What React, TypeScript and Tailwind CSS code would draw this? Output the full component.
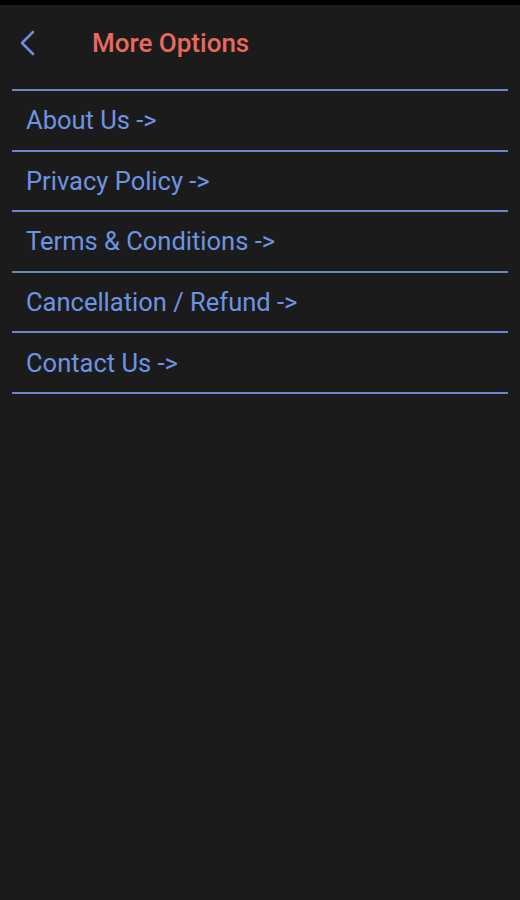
const items = [
  'About Us ->',
  'Privacy Policy ->',
  'Terms & Conditions ->',
  'Cancellation / Refund ->',
  'Contact Us ->',
];

export default function App() {
  return (
    <div className="min-h-[900px] w-[520px] bg-[#1b1b1b] font-['Roboto',sans-serif]">
      <div className="h-[5px] bg-black" />
      <div className="flex h-[84px] items-center pb-[8px] pl-[18px]">
        <svg
          width="22"
          height="26"
          viewBox="0 0 22 26"
          fill="none"
          stroke="#6b8fdc"
          strokeWidth="2.6"
          strokeLinecap="round"
          strokeLinejoin="round"
        >
          <path d="M15 2L4 13l11 11" />
        </svg>
        <h1 className="ml-[52px] text-[26px] font-medium text-[#e8695e]">More Options</h1>
      </div>
      <ul className="mx-[12px] border-t-2 border-[#6b87c9]">
        {items.map((item) => (
          <li
            key={item}
            className="flex h-[60.6px] items-center border-b-2 border-[#6b87c9] pl-[14px] text-[25.5px] text-[#6d94e2]"
          >
            {item}
          </li>
        ))}
      </ul>
    </div>
  );
}
